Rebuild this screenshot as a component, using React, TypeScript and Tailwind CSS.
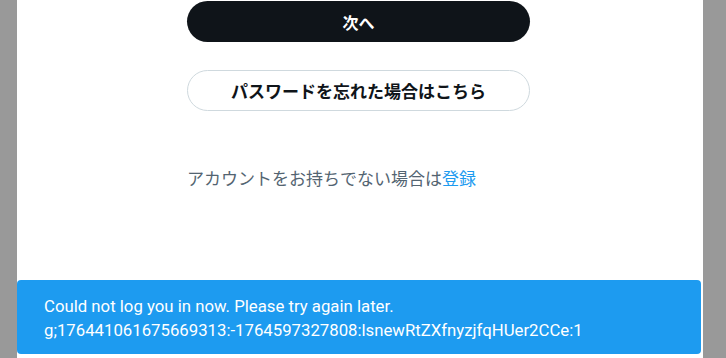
export default function App() {
  const jp = { fontFamily: '"Noto Sans CJK JP", "Liberation Sans", sans-serif' };
  return (
    <div className="h-[358px] w-full bg-[#999999] overflow-hidden">
      <div className="relative ml-[17px] mr-[23px] h-full bg-white">
        <div className="pl-[170px] pt-px" style={jp}>
          <div className="w-[343px]">
            <button className="flex h-[41px] w-full items-center justify-center rounded-full bg-[#0f1419] text-[16px] font-bold text-white">
              次へ
            </button>
            <button className="mt-[28px] flex h-[41px] w-full items-center justify-center rounded-full border border-[#cfd9de] bg-white text-[17px] font-bold text-[#0f1419]">
              パスワードを忘れた場合はこちら
            </button>
            <p className="mt-[57px] text-[17px] leading-5 text-[#536471]">
              アカウントをお持ちでない場合は<span className="text-[#1d9bf0]">登録</span>
            </p>
          </div>
        </div>

        {/* toast */}
        <div
          className="absolute bottom-[4px] left-0 right-[2px] h-[74px] rounded-[4px] bg-[#1d9bf0] px-[27px] pt-[14px] text-[16.75px] leading-6 text-white"
          style={{ fontFamily: '"Roboto", sans-serif' }}
        >
          <p>Could not log you in now. Please try again later.</p>
          <p>g;176441061675669313:-1764597327808:lsnewRtZXfnyzjfqHUer2CCe:1</p>
        </div>
      </div>
    </div>
  );
}
